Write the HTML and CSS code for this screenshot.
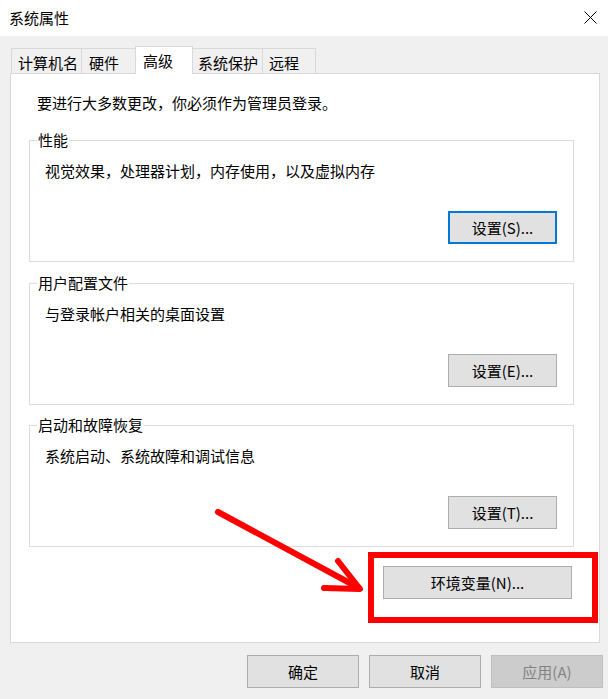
FILE: index.html
```html
<!DOCTYPE html>
<html lang="zh-CN">
<head>
<meta charset="utf-8">
<title>系统属性</title>
<link rel="stylesheet" href="styles.css">
</head>
<body>
<div class="window">
  <div class="titlebar">
    <span class="title">系统属性</span>
    <svg class="close" width="13" height="13" viewBox="0 0 13 13"><path d="M0.5 0.5 L12.5 12.5 M12.5 0.5 L0.5 12.5" stroke="#000" stroke-width="1" fill="none"/></svg>
  </div>
  <div class="tabs">
    <div class="tab t1">计算机名</div>
    <div class="tab t2">硬件</div>
    <div class="tab active">高级</div>
    <div class="tab t4">系统保护</div>
    <div class="tab t5">远程</div>
  </div>
  <div class="panel">
    <p class="intro">要进行大多数更改，你必须作为管理员登录。</p>
    <div class="group">
      <span class="legend">性能</span>
      <p class="desc">视觉效果，处理器计划，内存使用，以及虚拟内存</p>
      <button class="btn focus">设置(S)...</button>
    </div>
    <div class="group">
      <span class="legend">用户配置文件</span>
      <p class="desc">与登录帐户相关的桌面设置</p>
      <button class="btn">设置(E)...</button>
    </div>
    <div class="group g3">
      <span class="legend">启动和故障恢复</span>
      <p class="desc">系统启动、系统故障和调试信息</p>
      <button class="btn">设置(T)...</button>
    </div>
    <div class="envrow">
      <button class="btn env">环境变量(N)...</button>
    </div>
  </div>
  <div class="footer">
    <button class="btn wide">确定</button>
    <button class="btn wide">取消</button>
    <button class="btn wide disabled">应用(A)</button>
  </div>
  <div class="highlight"></div>
  <svg class="arrow" width="608" height="699" viewBox="0 0 608 699">
    <path d="M218 512 L359 588" stroke="#ff0000" stroke-width="6" stroke-linecap="round" fill="none"/>
    <path d="M338 561 L360 589 L324 588" stroke="#ff0000" stroke-width="6" stroke-linecap="round" stroke-linejoin="round" fill="none"/>
  </svg>
</div>
</body>
</html>
```

FILE: styles.css
```css
* { box-sizing: border-box; }
html, body {
  margin: 0;
  padding: 0;
  background: #f0f0f0;
}
body {
  font-family: "Noto Sans CJK SC", "Noto Sans", sans-serif;
  font-size: 15px;
  line-height: 20px;
  color: #000;
}
.window {
  position: relative;
  width: 608px;
  height: 699px;
  overflow: hidden;
}
.titlebar {
  height: 36px;
  background: #fff;
  display: flex;
  align-items: center;
  justify-content: space-between;
  padding: 0 11px 1px 9px;
}
.close { display: block; margin-top: 0; }
.tabs {
  display: flex;
  align-items: flex-end;
  height: 28px;
  margin: 10px 0 -1px 11px;
  position: relative;
  z-index: 1;
}
.tab {
  height: 25px;
  border: 1px solid #d9d9d9;
  border-bottom: none;
  background: #f0f0f0;
  display: flex;
  align-items: center;
  padding-left: 6px;
  padding-top: 3px;
  margin-bottom: 1px;
}
.t1 { width: 71px; }
.t2 { width: 55px; padding-left: 7px; border-left: none; }
.t4 { width: 70px; padding-left: 5px; border-left: none; }
.t5 { width: 53px; padding-left: 6px; border-left: none; }
.tab.active {
  height: 28px;
  width: 58px;
  margin: 0 0 0 -2px;
  background: #fff;
  padding-left: 7px;
  padding-top: 0;
  position: relative;
}
.panel {
  margin-left: 10px;
  width: 590px;
  height: 570px;
  background: #fff;
  border: 1px solid #d9d9d9;
  padding: 19px 25px 0 18px;
}
.intro {
  margin: 0 0 27px 0;
  padding-left: 8px;
}
.group {
  position: relative;
  height: 122px;
  border: 1px solid #dcdcdc;
  padding: 20px 16px 17px 15px;
  display: flex;
  flex-direction: column;
  margin-bottom: 21px;
}
.group.g3 { margin-top: -1px; margin-bottom: 19px; }
.legend {
  position: absolute;
  top: -11px;
  left: 7px;
  padding: 0 1px;
  background: #fff;
}
.desc { margin: 0; }
.btn {
  font-family: inherit;
  font-size: 15px;
  line-height: 20px;
  color: #000;
  background: #e1e1e1;
  border: 1px solid #adadad;
  height: 33px;
  width: 109px;
  padding: 0;
  margin: 0;
}
.group .btn {
  margin-top: auto;
  align-self: flex-end;
}
.btn.focus { border: 2px solid #0078d7; }
.envrow {
  display: flex;
  justify-content: flex-end;
  padding-right: 2px;
}
.btn.env { width: 189px; }
.footer {
  display: flex;
  justify-content: flex-end;
  gap: 10px;
  margin-top: 12px;
  padding-right: 5px;
}
.btn.wide { width: 112px; height: 33px; }
.btn.disabled {
  background: #cccccc;
  border-color: #bfbfbf;
  color: #838383;
}
.highlight {
  position: absolute;
  left: 368px;
  top: 552px;
  width: 230px;
  height: 71px;
  border: 6px solid #ff0000;
}
.arrow {
  position: absolute;
  left: 0;
  top: 0;
  pointer-events: none;
}
```
